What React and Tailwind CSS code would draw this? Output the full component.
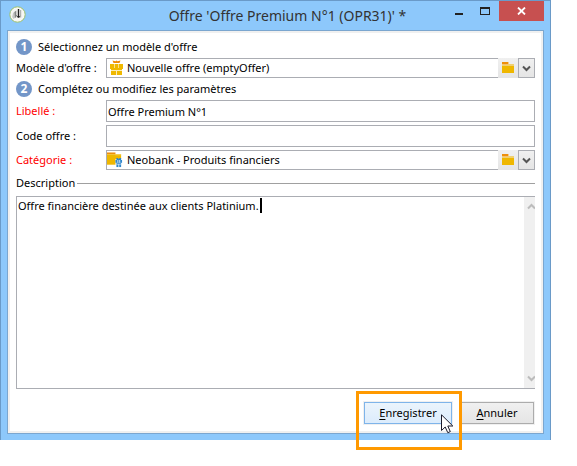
import React from "react";

function AppIcon() {
  return (
    <svg width="17" height="17" viewBox="0 0 17 17" aria-hidden="true">
      <circle cx="8.5" cy="8.5" r="7.7" fill="#f7f7f4" stroke="#9cc06c" strokeWidth="1" />
      <path d="M4 7 6.5 5V11.5L4.5 13 3.2 11Z" fill="#c4c6c4" />
      <path d="M5.5 6 7.3 4.5V11L6 12Z" fill="#858886" />
      <path d="M9.5 3V11" stroke="#222" strokeWidth="1.4" />
      <path d="M7.6 9.5 9.5 12 11.2 9.8" fill="none" stroke="#333" strokeWidth="1" />
      <path d="M11.7 4V11.5" stroke="#a0a3a0" strokeWidth="1" />
    </svg>
  );
}

function GiftIcon() {
  return (
    <svg width="13" height="16" viewBox="0 0 13 16" aria-hidden="true">
      <path d="M2.5 .5 5.5 1.2 6.5 .4 7.5 1.2 10.5 .5 9.5 3H3.5Z" fill="#f08c0a" />
      <path d="M0 4H13V9H0Z" fill="#efb800" />
      <path d="M1 9H12V15H1Z" fill="#efb800" />
      <path d="M4 4H5V8H4ZM8 4H9V8H8Z" fill="#f9e08a" />
      <path d="M1 10H12V11H1ZM6 11H7V15H6Z" fill="#fbedb8" />
    </svg>
  );
}

function FolderIcon() {
  return (
    <svg width="12" height="12" viewBox="0 0 12 12" aria-hidden="true" shapeRendering="crispEdges">
      <path d="M0 0H6V2H0Z" fill="#ee8f0c" />
      <path d="M6 0H7V2H6Z" fill="#f5c98a" />
      <path d="M0 2H12V4H0Z" fill="#f0d070" />
      <path d="M1 2H6V3H1Z" fill="#f5c070" />
      <path d="M0 4H12V11H0Z" fill="#efb700" />
    </svg>
  );
}

function FolderGiftIcon() {
  return (
    <svg width="17" height="16" viewBox="0 0 17 16" aria-hidden="true">
      <path d="M0 0H9V2H0Z" fill="#ee8f0c" />
      <path d="M0 2H15V13H0Z" fill="#efb700" />
      <path d="M9 2H15V3H9Z" fill="#f3cc55" />
      <path d="M9 7H16V16H9Z" fill="#fff" />
      <path d="M10 6H12V7H13V6H15V8H10Z" fill="#2f86cc" />
      <path d="M9 8H16V11H9Z" fill="#2f86cc" />
      <path d="M10 11H15V15.5H10Z" fill="#2f86cc" />
      <path d="M11 8H12V11H11ZM13 8H14V11H13ZM10 12H15V12.7H10ZM12 12H13V15.5H12Z" fill="#cfe4f6" />
    </svg>
  );
}

function Chevron({ up, className }) {
  return (
    <svg width="9" height="7" viewBox="0 0 9 7" aria-hidden="true" className={className}>
      <path d={up ? "M1 5.5 4.5 2 8 5.5" : "M1 1.5 4.5 5 8 1.5"} fill="none" stroke="currentColor" strokeWidth="2" />
    </svg>
  );
}

function Step({ number, children }) {
  return (
    <h2 className="flex h-4 items-center gap-1.5">
      <span className="flex size-4 items-center justify-center rounded-full bg-[#7396c8] text-[12px] leading-4 font-bold text-white">
        {number}
      </span>
      {children}
    </h2>
  );
}

function TextRow({ id, label, value, required }) {
  return (
    <div className="flex h-[22px] items-center">
      <label htmlFor={id} className={required ? "w-[90px] shrink-0 text-[#ff0000]" : "w-[90px] shrink-0"}>
        {label}
      </label>
      <input
        id={id}
        type="text"
        defaultValue={value}
        className="h-full min-w-0 flex-1 border border-[#abadb3] bg-white px-px outline-none"
      />
    </div>
  );
}

function PickerRow({ id, label, value, required, icon }) {
  return (
    <div className="flex h-5 items-center">
      <label htmlFor={id} className={required ? "w-[90px] shrink-0 text-[#ff0000]" : "w-[90px] shrink-0"}>
        {label}
      </label>
      <div className="flex h-full min-w-0 flex-1 items-center border-y border-l border-[#abadb3]">
        <span className="flex w-5 shrink-0 justify-end pr-1">{icon}</span>
        <input id={id} type="text" defaultValue={value} className="min-w-0 flex-1 bg-transparent outline-none" />
      </div>
      <button type="button" aria-label="Parcourir" className="flex h-full w-5 items-center justify-center bg-linear-to-b from-[#f0f0f0] to-[#e5e5e5]">
        <FolderIcon />
      </button>
      <button type="button" aria-label="Ouvrir la liste" className="flex h-full w-[17px] items-center justify-center border border-[#abadb3] bg-linear-to-b from-[#f0f0f0] to-[#e5e5e5] text-[#555]">
        <Chevron />
      </button>
    </div>
  );
}

function TitleBar() {
  return (
    <header className="flex h-[29px] items-start pl-2">
      <div className="mt-[5px]">
        <AppIcon />
      </div>
      <h1 className="min-w-0 flex-1 pl-[104px] text-center text-[14px] leading-[30px] text-[#333]">
        Offre 'Offre Premium N°1 (OPR31)' *
      </h1>
      <div className="mr-1.5 flex h-5">
        <button type="button" aria-label="Réduire" className="flex w-[27px] items-center justify-center">
          <svg width="9" height="20" viewBox="0 0 9 20" aria-hidden="true">
            <path d="M1 12H9V14H1Z" fill="#222" />
          </svg>
        </button>
        <button type="button" aria-label="Agrandir" className="flex w-[27px] items-center justify-center">
          <svg width="11" height="20" viewBox="0 0 11 20" aria-hidden="true">
            <path d="M0 6H10V14H0ZM1 8V13H9V8Z" fill="#222" fillRule="evenodd" />
          </svg>
        </button>
        <button type="button" aria-label="Fermer" className="flex w-[45px] items-center justify-center bg-[#c75050]">
          <svg width="9" height="8" viewBox="0 0 9 8" aria-hidden="true">
            <path d="M1 .5 8 7.5M8 .5 1 7.5" stroke="#fff" strokeWidth="1.8" />
          </svg>
        </button>
      </div>
    </header>
  );
}

function Pointer() {
  return (
    <svg width="13" height="20" viewBox="0 0 13 20" aria-hidden="true">
      <path d="M.5 .8V16.5L4.2 13 6.8 18.7 9.3 17.6 6.8 12H11.8Z" fill="#fff" stroke="#1a1a2a" strokeWidth="1" />
    </svg>
  );
}

export default function App() {
  return (
    <main className="bg-white pr-[26px] pb-[26px] font-['Noto_Sans','Open_Sans',sans-serif] text-[11px] leading-4 text-black">
      <section className="border-x border-t border-[#6a9ac8] bg-[#8dc8fb] pb-1.5">
        <TitleBar />
        <div className="mx-1.5 border border-[#7ba6cf]">
          <form className="border-2 border-[#f0f0f0] bg-white px-1.5 pt-1.5 pb-[7px]" onSubmit={(e) => e.preventDefault()}>
            <div className="flex flex-col gap-[3px]">
              <Step number="1">Sélectionnez un modèle d'offre</Step>
              <PickerRow id="modele" label="Modèle d'offre :" value="Nouvelle offre (emptyOffer)" icon={<GiftIcon />} />
              <Step number="2">Complétez ou modifiez les paramètres</Step>
              <TextRow id="libelle" label="Libellé :" value="Offre Premium N°1" required />
              <TextRow id="code" label="Code offre :" value="" />
              <PickerRow id="categorie" label="Catégorie :" value="Neobank - Produits financiers" icon={<FolderGiftIcon />} required />
            </div>

            <div className="my-1 flex h-[18px] items-center gap-0.5">
              <label htmlFor="description">Description</label>
              <span className="h-px flex-1 bg-[#a0a0a0]" />
            </div>

            <div className="relative flex h-[193px] border-y border-l border-[#abadb3]">
              <textarea
                id="description"
                defaultValue="Offre financière destinée aux clients Platinium."
                className="min-w-0 flex-1 resize-none overflow-hidden bg-transparent px-px pt-px outline-none"
              />
              <span className="absolute left-[243px] top-px h-[15px] w-0.5 bg-black" />
              <div className="flex w-[11px] flex-col items-end justify-between overflow-hidden bg-[#f0f0f0] py-1.5 text-[#bcbcbc]">
                <Chevron up className="-mr-px" />
                <Chevron className="-mr-px" />
              </div>
            </div>

            <div className="mt-3 mr-px flex justify-end gap-2 pt-px">
              <div className="relative">
                <button type="submit" className="h-[22px] w-[88px] border border-[#7eb4ea] bg-linear-to-b from-[#ebf4fc] to-[#dcecfc] outline-1 outline-[#f0f0f0]">
                  <span className="underline underline-offset-2">E</span>nregistrer
                </button>
                <div className="pointer-events-none absolute -top-[11px] -left-2 z-10 h-[59px] w-[106px] border-3 border-[#ff9900]" />
                <div className="pointer-events-none absolute top-3 left-[77px] z-10">
                  <Pointer />
                </div>
              </div>
              <button type="button" className="h-[22px] w-[74px] border border-[#acacac] bg-linear-to-b from-[#f0f0f0] to-[#e5e5e5] outline-1 outline-[#f0f0f0]">
                <span className="underline underline-offset-2">A</span>nnuler
              </button>
            </div>
          </form>
        </div>
      </section>
    </main>
  );
}
